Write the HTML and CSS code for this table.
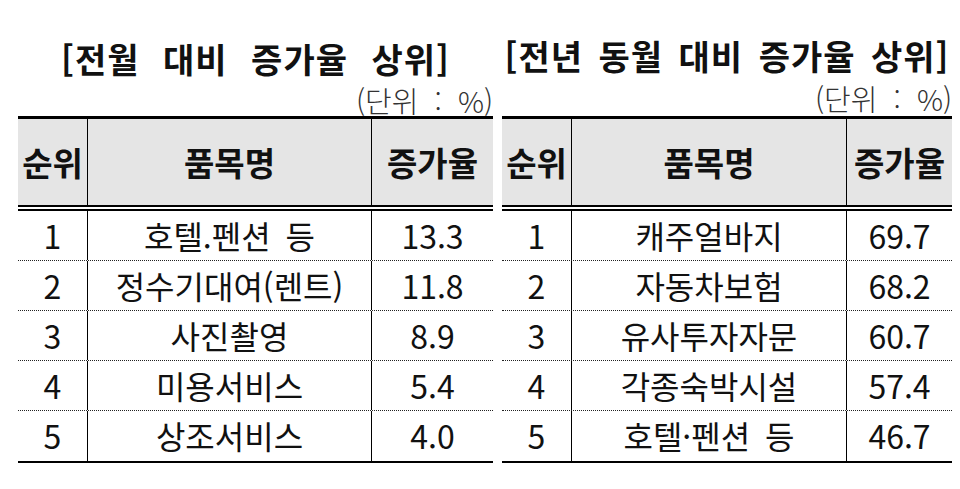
FILE: index.html
```html
<!DOCTYPE html>
<html lang="ko">
<head>
<meta charset="utf-8">
<title>증가율 상위</title>
<link rel="stylesheet" href="styles.css">
</head>
<body>
<div class="page">
  <section class="panel panel-left">
    <h2 class="title">[전월 대비 증가율 상위]</h2>
    <div class="unit">(단위 : %)</div>
    <div class="table">
      <div class="row head"><div class="c">순위</div><div class="c">품목명</div><div class="c">증가율</div></div>
      <div class="row"><div class="c">1</div><div class="c">호텔.펜션 등</div><div class="c">13.3</div></div>
      <div class="row"><div class="c">2</div><div class="c">정수기대여(렌트)</div><div class="c">11.8</div></div>
      <div class="row"><div class="c">3</div><div class="c">사진촬영</div><div class="c">8.9</div></div>
      <div class="row"><div class="c">4</div><div class="c">미용서비스</div><div class="c">5.4</div></div>
      <div class="row last"><div class="c">5</div><div class="c">상조서비스</div><div class="c">4.0</div></div>
    </div>
  </section>
  <section class="panel panel-right">
    <h2 class="title">[전년 동월 대비 증가율 상위]</h2>
    <div class="unit">(단위 : %)</div>
    <div class="table">
      <div class="row head"><div class="c">순위</div><div class="c">품목명</div><div class="c">증가율</div></div>
      <div class="row"><div class="c">1</div><div class="c">캐주얼바지</div><div class="c">69.7</div></div>
      <div class="row"><div class="c">2</div><div class="c">자동차보험</div><div class="c">68.2</div></div>
      <div class="row"><div class="c">3</div><div class="c">유사투자자문</div><div class="c">60.7</div></div>
      <div class="row"><div class="c">4</div><div class="c">각종숙박시설</div><div class="c">57.4</div></div>
      <div class="row last"><div class="c">5</div><div class="c">호텔·펜션 등</div><div class="c">46.7</div></div>
    </div>
  </section>
</div>
</body>
</html>
```
FILE: styles.css
```css
html, body {
  margin: 0;
  padding: 0;
  background: #fff;
}
body {
  font-family: "Noto Sans CJK KR", "Noto Sans", sans-serif;
  color: #111;
}
.page {
  display: flex;
  gap: 9px;
  padding-left: 18px;
}
.panel {
  display: flex;
  flex-direction: column;
}
.panel-left { width: 475px; }
.panel-right { width: 450px; }

.title {
  margin: 38px 0 0;
  height: 42px;
  line-height: 42px;
  font-size: 34px;
  font-weight: 700;
  text-align: center;
  white-space: pre;
  letter-spacing: 1px;
  word-spacing: 13px;
}
.panel-right .title {
  margin-top: 35px;
  word-spacing: 5px;
}
.unit {
  height: 36px;
  line-height: 40px;
  font-size: 29px;
  font-weight: 300;
  color: #333;
  text-align: right;
  white-space: pre;
  word-spacing: 8px;
}
.panel-right .unit {
  height: 39px;
  line-height: 42px;
}

.table {
  display: flex;
  flex-direction: column;
}
.row {
  display: grid;
  box-sizing: border-box;
  height: 50px;
  border-bottom: 1px dotted #222;
  font-size: 32px;
  font-weight: 400;
}
.panel-left .row { grid-template-columns: 69px 284px 1fr; }
.panel-right .row { grid-template-columns: 69px 275px 1fr; }
.row.head {
  height: 95px;
  border-top: 3px solid #000;
  border-bottom: 6px double #000;
  font-size: 33px;
  font-weight: 700;
}
.row.head .c {
  background: #e5e5e5;
}
.row.last {
  height: 52px;
  border-bottom: 2px solid #000;
}
.c {
  display: flex;
  align-items: center;
  justify-content: center;
  white-space: pre;
  word-spacing: 6px;
  padding-bottom: 2px;
}
.row.head .c {
  padding-bottom: 0;
}
.c + .c {
  border-left: 1px solid #000;
}
```
